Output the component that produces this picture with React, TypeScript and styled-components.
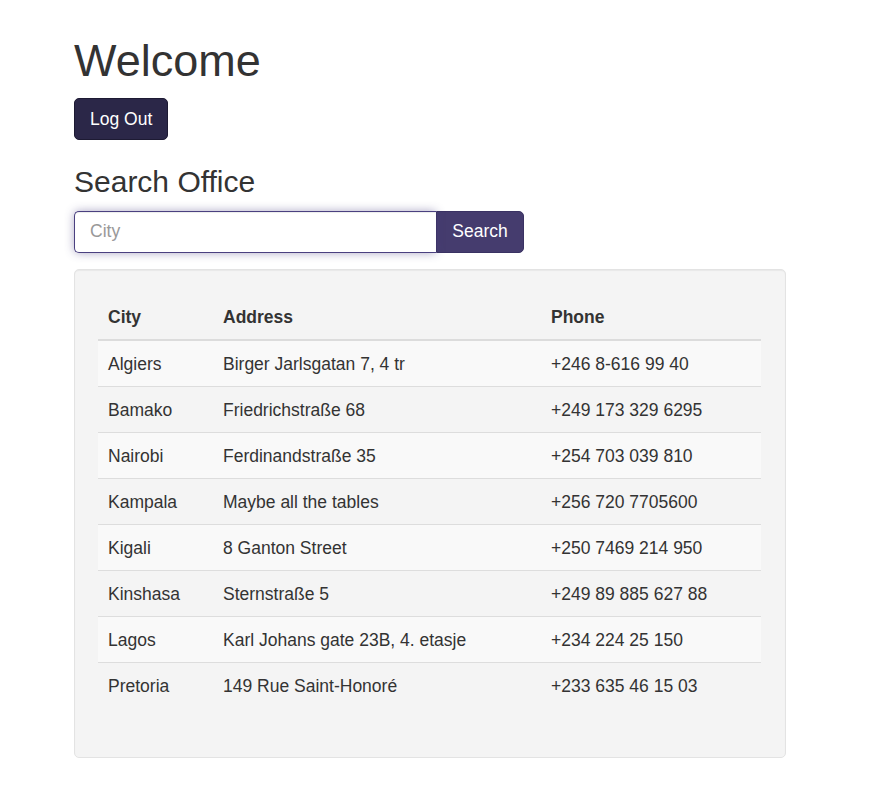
import React from 'react';
import styled, { createGlobalStyle } from 'styled-components';

const offices = [
  { city: 'Algiers', address: 'Birger Jarlsgatan 7, 4 tr', phone: '+246 8-616 99 40' },
  { city: 'Bamako', address: 'Friedrichstraße 68', phone: '+249 173 329 6295' },
  { city: 'Nairobi', address: 'Ferdinandstraße 35', phone: '+254 703 039 810' },
  { city: 'Kampala', address: 'Maybe all the tables', phone: '+256 720 7705600' },
  { city: 'Kigali', address: '8 Ganton Street', phone: '+250 7469 214 950' },
  { city: 'Kinshasa', address: 'Sternstraße 5', phone: '+249 89 885 627 88' },
  { city: 'Lagos', address: 'Karl Johans gate 23B, 4. etasje', phone: '+234 224 25 150' },
  { city: 'Pretoria', address: '149 Rue Saint-Honoré', phone: '+233 635 46 15 03' },
];

function App() {
  return (
    <>
      <GlobalStyle />
      <Page>
        <Title>Welcome</Title>
        <LogOutButton type="button">Log Out</LogOutButton>
        <SubTitle>Search Office</SubTitle>
        <InputGroup>
          <CityInput placeholder="City" autoFocus />
          <SearchButton type="button">Search</SearchButton>
        </InputGroup>
        <Well>
          <Table>
            <thead>
              <tr>
                <Th $width={115}>City</Th>
                <Th $width={328}>Address</Th>
                <Th>Phone</Th>
              </tr>
            </thead>
            <tbody>
              {offices.map((o) => (
                <Row key={o.city}>
                  <Td>{o.city}</Td>
                  <Td>{o.address}</Td>
                  <Td>{o.phone}</Td>
                </Row>
              ))}
            </tbody>
          </Table>
        </Well>
      </Page>
    </>
  );
}

const GlobalStyle = createGlobalStyle`
  body {
    margin: 0;
    background: #fff;
    color: #333;
    font-family: "Liberation Sans", Arial, sans-serif;
    font-size: 17.5px;
    line-height: 25px;
  }
`;

const Page = styled.div`
  width: 712px;
  padding: 11px 0 0 74px;
  display: flex;
  flex-direction: column;
  align-items: flex-start;
`;

const Title = styled.h1`
  margin: 25px 0 12.5px;
  font-size: 45px;
  line-height: 49.5px;
  font-weight: 500;
  color: #333;
`;

const SubTitle = styled.h3`
  margin: 25px 0 12.5px;
  font-size: 30px;
  line-height: 33px;
  font-weight: 500;
  color: #333;
`;

const LogOutButton = styled.button`
  font-family: inherit;
  font-size: 17.5px;
  line-height: 25px;
  padding: 7.5px 15px;
  border: 1px solid #1d1a33;
  border-radius: 5px;
  background: #2b2748;
  color: #fff;
  cursor: pointer;
`;

const InputGroup = styled.div`
  display: flex;
  width: 450px;
  height: 42px;
`;

const CityInput = styled.input`
  flex: 1;
  min-width: 0;
  box-sizing: border-box;
  height: 42px;
  padding: 7.5px 15px;
  font-family: inherit;
  font-size: 17.5px;
  color: #555;
  border: 1px solid #4a4080;
  border-right: none;
  border-radius: 5px 0 0 5px;
  outline: none;
  box-shadow: inset 0 1px 1px rgba(0, 0, 0, 0.075), 0 0 10px rgba(74, 64, 128, 0.45);
  position: relative;
  z-index: 1;

  &::placeholder {
    color: #999;
  }
`;

const SearchButton = styled.button`
  width: 88px;
  height: 42px;
  font-family: inherit;
  font-size: 17.5px;
  padding: 0;
  border: 1px solid #3a3263;
  border-radius: 0 5px 5px 0;
  background: #453c6e;
  color: #fff;
  cursor: pointer;
`;

const Well = styled.div`
  box-sizing: border-box;
  width: 712px;
  margin-top: 16px;
  padding: 24px 24px 24px 23px;
  background: #f4f4f4;
  border: 1px solid #e3e3e3;
  border-radius: 5px;
  box-shadow: inset 0 1px 1px rgba(0, 0, 0, 0.05);
`;

const Table = styled.table`
  width: 100%;
  table-layout: fixed;
  border-collapse: collapse;
  border-spacing: 0;
  margin-bottom: 25px;
`;

const Th = styled.th<{ $width?: number }>`
  width: ${(p) => (p.$width ? `${p.$width}px` : 'auto')};
  box-sizing: border-box;
  text-align: left;
  font-weight: bold;
  padding: 11px 10px 9px;
  line-height: 25px;
  border-bottom: 2px solid #dcdcdc;
`;

const Row = styled.tr`
  &:nth-child(odd) {
    background: #f9f9f9;
  }
`;

const Td = styled.td`
  padding: 11px 10px 9px;
  line-height: 25px;
  border-top: 1px solid #ddd;
  vertical-align: top;
`;

export default App;
